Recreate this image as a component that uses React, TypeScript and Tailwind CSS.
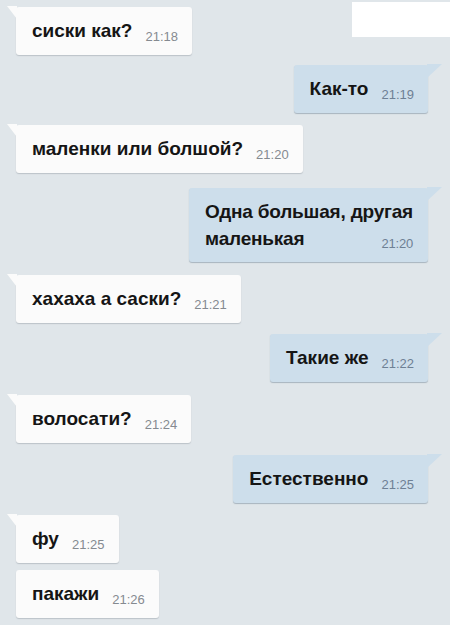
import React from 'react'

type Side = 'in' | 'out'

interface Message {
  id: number
  side: Side
  lines: string[]
  time: string
  tail?: boolean
  // spacing from the previous bubble, kept per message
  gap: string
}

const messages: Message[] = [
  { id: 1, side: 'in', lines: ['сиски как?'], time: '21:18', tail: true, gap: 'mt-[7px]' },
  { id: 2, side: 'out', lines: ['Как-то'], time: '21:19', tail: true, gap: 'mt-[10px]' },
  { id: 3, side: 'in', lines: ['маленки или болшой?'], time: '21:20', tail: true, gap: 'mt-[12px]' },
  { id: 4, side: 'out', lines: ['Одна большая, другая', 'маленькая'], time: '21:20', tail: true, gap: 'mt-[15px]' },
  { id: 5, side: 'in', lines: ['хахаха а саски?'], time: '21:21', tail: true, gap: 'mt-[13px]' },
  { id: 6, side: 'out', lines: ['Такие же'], time: '21:22', tail: true, gap: 'mt-[11px]' },
  { id: 7, side: 'in', lines: ['волосати?'], time: '21:24', tail: true, gap: 'mt-[13px]' },
  { id: 8, side: 'out', lines: ['Естественно'], time: '21:25', tail: true, gap: 'mt-[12px]' },
  { id: 9, side: 'in', lines: ['фу'], time: '21:25', tail: true, gap: 'mt-[12px]' },
  { id: 10, side: 'in', lines: ['пакажи'], time: '21:26', gap: 'mt-[7px]' },
]

function Tail({ side }: { side: Side }) {
  if (side === 'in') {
    return (
      <svg
        className="absolute -left-[9px] -top-[1px]"
        width="10"
        height="14"
        viewBox="0 0 10 14"
      >
        <path d="M0 0 L10 0 L10 13 Z" fill="#fbfbfb" />
      </svg>
    )
  }
  return (
    <svg
      className="absolute -right-[14px] -top-[1px]"
      width="15"
      height="15"
      viewBox="0 0 15 15"
    >
      <path d="M15 0 L0 0 L0 14 Z" fill="#cddeeb" />
    </svg>
  )
}

function Time({ value, side }: { value: string; side: Side }) {
  return (
    <span
      className={`text-[13px] font-normal leading-none translate-y-[5px] ${
        side === 'in' ? 'text-[#858a90]' : 'text-[#6e8094]'
      }`}
    >
      {value}
    </span>
  )
}

function Bubble({ msg }: { msg: Message }) {
  const base =
    msg.side === 'in'
      ? 'bg-[#fbfbfb] shadow-[0_1px_1px_rgba(120,130,140,0.35)] ml-[16px] self-start'
      : 'bg-[#cddeeb] shadow-[0_1px_1px_rgba(100,120,140,0.45)] mr-[22px] self-end'

  const multi = msg.lines.length > 1

  return (
    <div className={`relative rounded-[3px] ${base} ${msg.gap}`}>
      {msg.tail && <Tail side={msg.side} />}
      {multi ? (
        <div className="flex flex-col pl-[16px] pr-[15px] pt-[10px] pb-[10px] leading-[27px] tracking-[-0.2px]">
          {msg.lines.slice(0, -1).map((line) => (
            <span key={line}>{line}</span>
          ))}
          <div className="flex items-center justify-between">
            <span>{msg.lines[msg.lines.length - 1]}</span>
            <Time value={msg.time} side={msg.side} />
          </div>
        </div>
      ) : (
        <div className="flex h-[48px] items-center gap-[13px] pl-[16px] pr-[14px]">
          <span>{msg.lines[0]}</span>
          <Time value={msg.time} side={msg.side} />
        </div>
      )}
    </div>
  )
}

export default function App() {
  return (
    <div
      className="relative w-[450px] h-[625px] overflow-hidden bg-[#e0e6ea] text-[19px] font-bold text-[#151515]"
      style={{ fontFamily: '"Liberation Sans", Arial, sans-serif' }}
    >
      {/* blank patch in the top corner */}
      <div className="absolute right-0 top-[2px] w-[98px] h-[35px] bg-white" />

      <div className="flex flex-col">
        {messages.map((m) => (
          <Bubble key={m.id} msg={m} />
        ))}
      </div>
    </div>
  )
}
